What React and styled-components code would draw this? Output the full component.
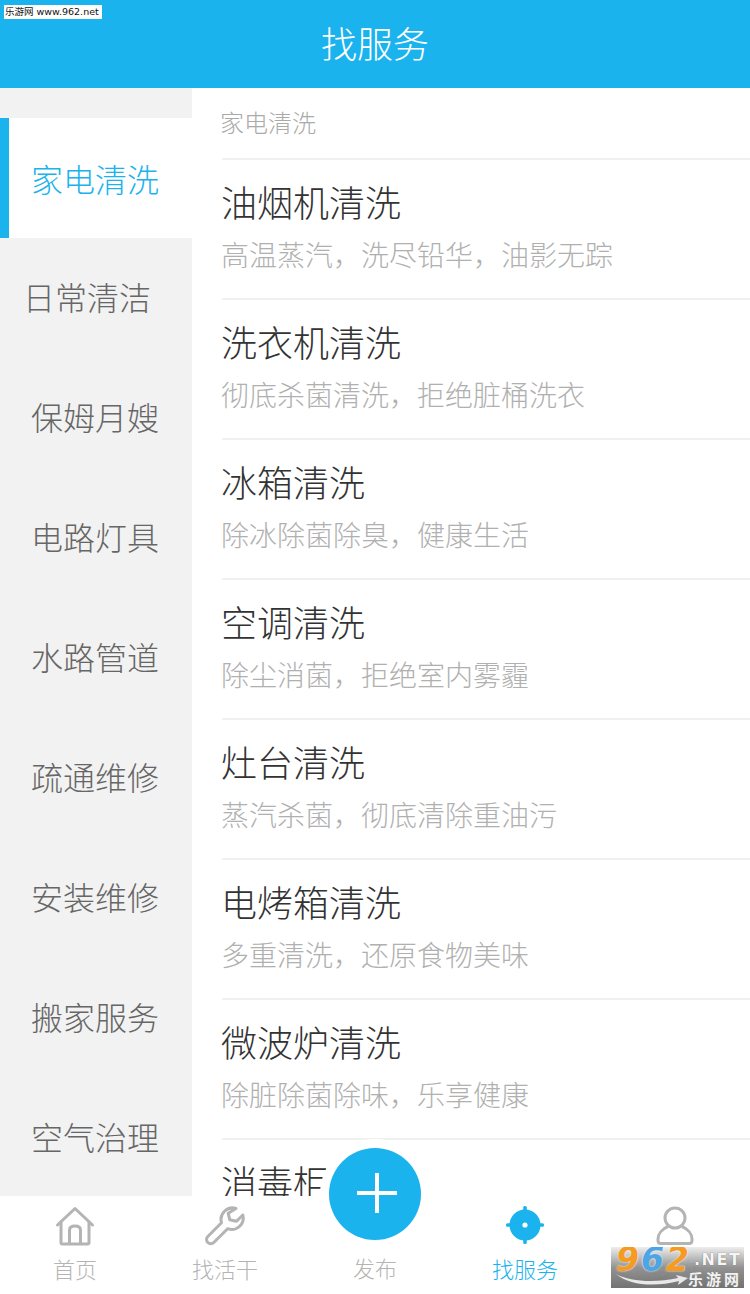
import React from 'react';
import styled, { createGlobalStyle } from 'styled-components';

const blue = '#1ab3ee';
const cjk = '"Noto Sans CJK SC", "Noto Sans", sans-serif';

const categories = [
  { name: '家电清洗', active: true },
  { name: '日常清洁', inset: 18 },
  { name: '保姆月嫂' },
  { name: '电路灯具' },
  { name: '水路管道' },
  { name: '疏通维修' },
  { name: '安装维修' },
  { name: '搬家服务' },
  { name: '空气治理' }
];

const services = [
  ['油烟机清洗', '高温蒸汽，洗尽铅华，油影无踪'],
  ['洗衣机清洗', '彻底杀菌清洗，拒绝脏桶洗衣'],
  ['冰箱清洗', '除冰除菌除臭，健康生活'],
  ['空调清洗', '除尘消菌，拒绝室内雾霾'],
  ['灶台清洗', '蒸汽杀菌，彻底清除重油污'],
  ['电烤箱清洗', '多重清洗，还原食物美味'],
  ['微波炉清洗', '除脏除菌除味，乐享健康'],
  ['消毒柜清洗', '高温消毒，安全健康']
];

// =============================================================================

const GlobalStyle = createGlobalStyle`
  html, body {
    margin: 0;
    padding: 0;
    background: #fff;
    font-family: ${cjk};
  }
`;

const Page = styled.div`
  position: relative;
  width: 750px;
  height: 1294px;
  display: flex;
  flex-direction: column;
  overflow: hidden;
  background: #fff;
`;

const Header = styled.header`
  flex: 0 0 88px;
  box-sizing: border-box;
  padding-bottom: 4px;
  display: flex;
  align-items: center;
  justify-content: center;
  background: ${blue};
  color: #fff;
  font-size: 36px;
  font-weight: 300;
`;

const Body = styled.div`
  flex: 1;
  min-height: 0;
  display: flex;
`;

const Sidebar = styled.nav`
  flex: 0 0 192px;
  padding-top: 30px;
  box-sizing: border-box;
  background: #f2f2f2;
  overflow: hidden;
`;

const Category = styled.div`
  height: 120px;
  box-sizing: border-box;
  display: flex;
  align-items: center;
  justify-content: center;
  padding-right: ${p => (p.$active ? 11 : p.$inset || 2)}px;
  padding-bottom: ${p => (p.$active ? 0 : 4)}px;
  font-size: 32px;
  font-weight: 300;
  color: ${p => (p.$active ? blue : '#666')};
  background: ${p => (p.$active ? '#fff' : 'transparent')};
  border-left: ${p => (p.$active ? `9px solid ${blue}` : 'none')};
`;

const Content = styled.main`
  flex: 1;
  min-width: 0;
  padding-left: 30px;
  overflow: hidden;
`;

const SectionTitle = styled.div`
  height: 70px;
  box-sizing: border-box;
  padding-bottom: 4px;
  margin-left: -2px;
  display: flex;
  align-items: center;
  font-size: 24px;
  font-weight: 300;
  color: #aaa;
`;

const Service = styled.div`
  height: 140px;
  box-sizing: border-box;
  border-top: 2px solid #f0f0f0;
  display: flex;
  flex-direction: column;
  padding-top: 15px;
`;

const ServiceName = styled.div`
  margin-left: -1px;
  font-size: 36px;
  line-height: 52px;
  font-weight: 300;
  color: #333;
`;

const ServiceDesc = styled.div`
  margin-top: 7px;
  margin-left: -1px;
  font-size: 28px;
  line-height: 40px;
  font-weight: 300;
  color: #b0b0b0;
`;

const TabBar = styled.footer`
  flex: 0 0 98px;
  display: grid;
  grid-template-columns: repeat(5, 150px);
  background: #fff;
`;

const Tab = styled.div`
  display: flex;
  flex-direction: column;
  align-items: center;
  justify-content: ${p => (p.$bare ? 'flex-end' : 'flex-start')};
  padding-top: ${p => (p.$bare ? 0 : 10)}px;
  padding-bottom: ${p => (p.$bare ? 9 : 0)}px;
  color: ${p => (p.$active ? blue : '#b4b4b4')};
  font-size: 22px;
  font-weight: 300;
`;

const TabIcon = styled.svg`
  width: 40px;
  height: 40px;
  display: block;
  margin-bottom: 4px;
`;

const TabLabel = styled.span`
  line-height: 36px;
`;

const Fab = styled.div`
  position: absolute;
  left: 329px;
  top: 1148px;
  width: 92px;
  height: 92px;
  box-sizing: border-box;
  padding: 0 0 2px 3px;
  border-radius: 50%;
  background: ${blue};
  box-shadow: 0 0 0 9px #fff;
  display: flex;
  align-items: center;
  justify-content: center;
`;

const SiteStamp = styled.div`
  position: absolute;
  left: 4px;
  top: 5px;
  width: 98px;
  height: 14px;
  overflow: hidden;
  background: #fff;
  color: #111;
  font-size: 9.5px;
  line-height: 14px;
  white-space: nowrap;
  padding-left: 1px;
  box-sizing: border-box;
  font-family: "DejaVu Sans", ${cjk};
`;

const Badge = styled.div`
  position: absolute;
  left: 611px;
  top: 1247px;
  width: 133px;
  height: 41px;
  overflow: hidden;
  background: linear-gradient(rgba(236, 236, 236, 0.92), rgba(140, 140, 140, 0.94) 50%, rgba(110, 110, 110, 0.97));
`;

const BadgeDigits = styled.span`
  position: absolute;
  left: 5px;
  top: -5px;
  font-family: "DejaVu Sans", sans-serif;
  font-size: 33px;
  line-height: 36px;
  font-weight: 700;
  font-style: italic;
  letter-spacing: 2px;
  color: #f59a23;
  text-shadow: 0 0 2px #fff;
`;

const BlueDigit = styled.span`
  color: #4ea5e6;
`;

const BadgeNet = styled.span`
  position: absolute;
  left: 83px;
  top: 3px;
  font-family: "DejaVu Sans", sans-serif;
  font-size: 16px;
  line-height: 20px;
  font-weight: 700;
  letter-spacing: 1.500px;
  color: #f6f6f6;
  text-shadow: 0 0 1px #555;
`;

const BadgeName = styled.span`
  position: absolute;
  left: 77px;
  top: 24px;
  font-size: 15px;
  line-height: 16px;
  font-weight: 700;
  letter-spacing: 3px;
  white-space: nowrap;
  color: #f2f2f2;
`;

const BadgeSwoosh = styled.svg`
  position: absolute;
  left: 5px;
  top: 25px;
  width: 72px;
  height: 14px;
`;

// =============================================================================

const HomeIcon = () =>
  <TabIcon viewBox="0 0 40 40" fill="none" stroke="#b4b4b4" strokeWidth="3" strokeLinejoin="round" strokeLinecap="round">
    <path d="M2.5 19 20 2.5 37.5 19" />
    <path d="M6 16v20.5q0 1.5 1.5 1.5h25q1.500 0 1.500-1.500V16" />
    <path d="M14.500 37V24q0-4 5.500-4t5.500 4v13" />
  </TabIcon>

const WrenchIcon = () =>
  <TabIcon viewBox="0 0 40 40" fill="none" stroke="#b4b4b4" strokeWidth="3" strokeLinejoin="round">
    <path d="M31 2.500a11.500 11.500 0 0 0-14.500 14.200L2.800 30.500a4.200 4.200 0 0 0 0 6 4.200 4.200 0 0 0 6 0l13.800-13.800A11.500 11.500 0 0 0 37.800 9l-6.300 6.200-6.800-1.500-1.500-6.500z" />
  </TabIcon>

const TargetIcon = () =>
  <TabIcon viewBox="0 1 40 40">
    <circle cx="20" cy="20" r="15.500" fill={blue} />
    <rect x="18.200" y="1" width="3.600" height="38" rx="1.500" fill={blue} />
    <rect x="1" y="18.200" width="38" height="3.600" rx="1.500" fill={blue} />
    <circle cx="20" cy="20" r="2.600" fill="#fff" />
  </TabIcon>

const UserIcon = () =>
  <TabIcon viewBox="0 0 40 40" fill="none" stroke="#b4b4b4" strokeWidth="3">
    <circle cx="20" cy="12" r="10" />
    <path d="M13 20.500C7 23 3 28 3 33v1.500q0 3 3 3h28q3 0 3-3V33c0-5-4-10-10-12.500" />
  </TabIcon>

const PlusIcon = () =>
  <svg width="40" height="40" viewBox="0 0 40 40" fill="#fff">
    <rect x="18" y="0" width="4" height="40" />
    <rect x="0" y="18" width="40" height="4" />
  </svg>

let App = () =>
  <Page>
    <GlobalStyle />
    <Header>找服务</Header>
    <Body>
      <Sidebar>
        {categories.map(c =>
          <Category key={c.name} $active={c.active} $inset={c.inset}>{c.name}</Category>
        )}
      </Sidebar>
      <Content>
        <SectionTitle>家电清洗</SectionTitle>
        {services.map(([name, desc]) =>
          <Service key={name}>
            <ServiceName>{name}</ServiceName>
            <ServiceDesc>{desc}</ServiceDesc>
          </Service>
        )}
      </Content>
    </Body>
    <TabBar>
      <Tab><HomeIcon /><TabLabel>首页</TabLabel></Tab>
      <Tab><WrenchIcon /><TabLabel>找活干</TabLabel></Tab>
      <Tab $bare><TabLabel>发布</TabLabel></Tab>
      <Tab $active><TargetIcon /><TabLabel>找服务</TabLabel></Tab>
      <Tab><UserIcon /><TabLabel>我的</TabLabel></Tab>
    </TabBar>
    <Fab><PlusIcon /></Fab>
    <SiteStamp>乐游网 www.962.net</SiteStamp>
    <Badge>
      <BadgeDigits>9<BlueDigit>6</BlueDigit>2</BadgeDigits>
      <BadgeNet>.NET</BadgeNet>
      <BadgeSwoosh viewBox="0 0 72 14" fill="#e8e8e8">
        <path d="M0 2C14 10 40 11 62 6l-2-3 12 3-10 7 1-4C40 15 14 14 0 2z" />
      </BadgeSwoosh>
      <BadgeName>乐游网</BadgeName>
    </Badge>
  </Page>

export default App;
